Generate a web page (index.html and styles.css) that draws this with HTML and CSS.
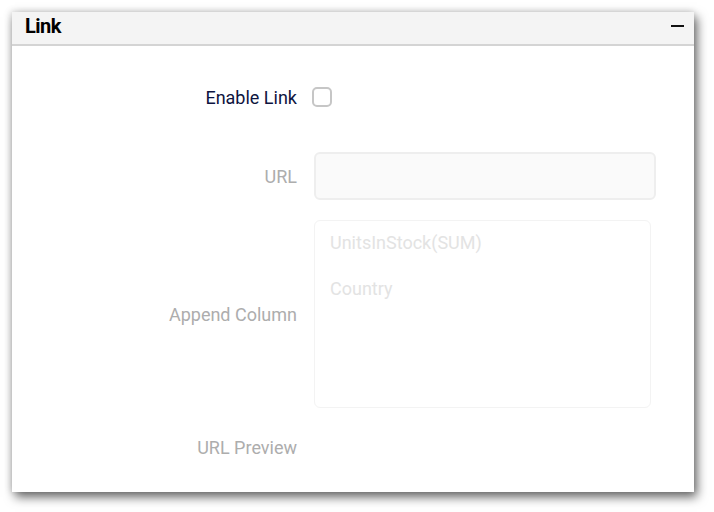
FILE: index.html
```html
<!DOCTYPE html>
<html>
<head>
<meta charset="utf-8">
<link rel="stylesheet" href="styles.css">
</head>
<body>
<div class="panel">
  <div class="header">
    <span class="title">Link</span>
    <span class="minimize"></span>
  </div>
  <div class="content">
    <div class="row row-enable">
      <div class="label label-dark">Enable Link</div>
      <div class="control"><span class="checkbox"></span></div>
    </div>
    <div class="row row-url">
      <div class="label">URL</div>
      <div class="control"><div class="input"></div></div>
    </div>
    <div class="row row-append">
      <div class="label">Append Column</div>
      <div class="control">
        <div class="listbox">
          <div class="item">UnitsInStock(SUM)</div>
          <div class="item">Country</div>
        </div>
      </div>
    </div>
    <div class="row row-preview">
      <div class="label">URL Preview</div>
      <div class="control"></div>
    </div>
  </div>
</div>
</body>
</html>
```
FILE: styles.css
```css
html, body {
  margin: 0;
  padding: 0;
  background: #ffffff;
  font-family: Roboto, "Liberation Sans", sans-serif;
}
body {
  padding: 12px 0 0 12px;
  height: 512px;
  box-sizing: border-box;
  overflow: hidden;
}
.panel {
  width: 682px;
  height: 480px;
  background: #ffffff;
  box-shadow: 3px 5px 10px rgba(0, 0, 0, 0.6), -1px -1px 7px rgba(0, 0, 0, 0.14);
  display: flex;
  flex-direction: column;
  overflow: hidden;
}
.header {
  flex: none;
  height: 32px;
  box-sizing: border-box;
  background: #f4f4f4;
  border-bottom: 2px solid #d4d4d4;
  display: flex;
  align-items: center;
  justify-content: space-between;
  padding: 0 10px 4px 13px;
  height: 34px;
}
.title {
  font-size: 20px;
  font-weight: bold;
  color: #000000;
  letter-spacing: -0.5px;
}
.minimize {
  width: 13px;
  height: 2px;
  background: #111111;
}
.content {
  padding-top: 36px;
  display: flex;
  flex-direction: column;
}
.row {
  display: grid;
  grid-template-columns: 285px 1fr;
  column-gap: 17px;
  align-items: center;
}
.label {
  text-align: right;
  font-size: 18px;
  color: #adadad;
}
.label-dark {
  color: #0e1440;
}
.row-enable {
  height: 30px;
}
.row-url {
  margin-top: 40px;
}
.row-append {
  margin-top: 20px;
}
.row-preview {
  margin-top: 24px;
  height: 30px;
}
.checkbox {
  display: block;
  width: 16px;
  height: 16px;
  border: 2px solid #c6c6c6;
  border-radius: 5px;
  margin-left: -2px;
}
.input {
  width: 338px;
  height: 44px;
  border: 2px solid #eeeeee;
  border-radius: 6px;
  background: #fafafa;
}
.listbox {
  border: 1px solid #f3f3f3;
  border-radius: 6px;
  padding-top: 11px;
  box-sizing: border-box;
  height: 188px;
  width: 337px;
}
.item {
  font-size: 18px;
  color: #e3e3e3;
  padding-left: 15px;
  height: 46px;
  line-height: 22px;
}
```
